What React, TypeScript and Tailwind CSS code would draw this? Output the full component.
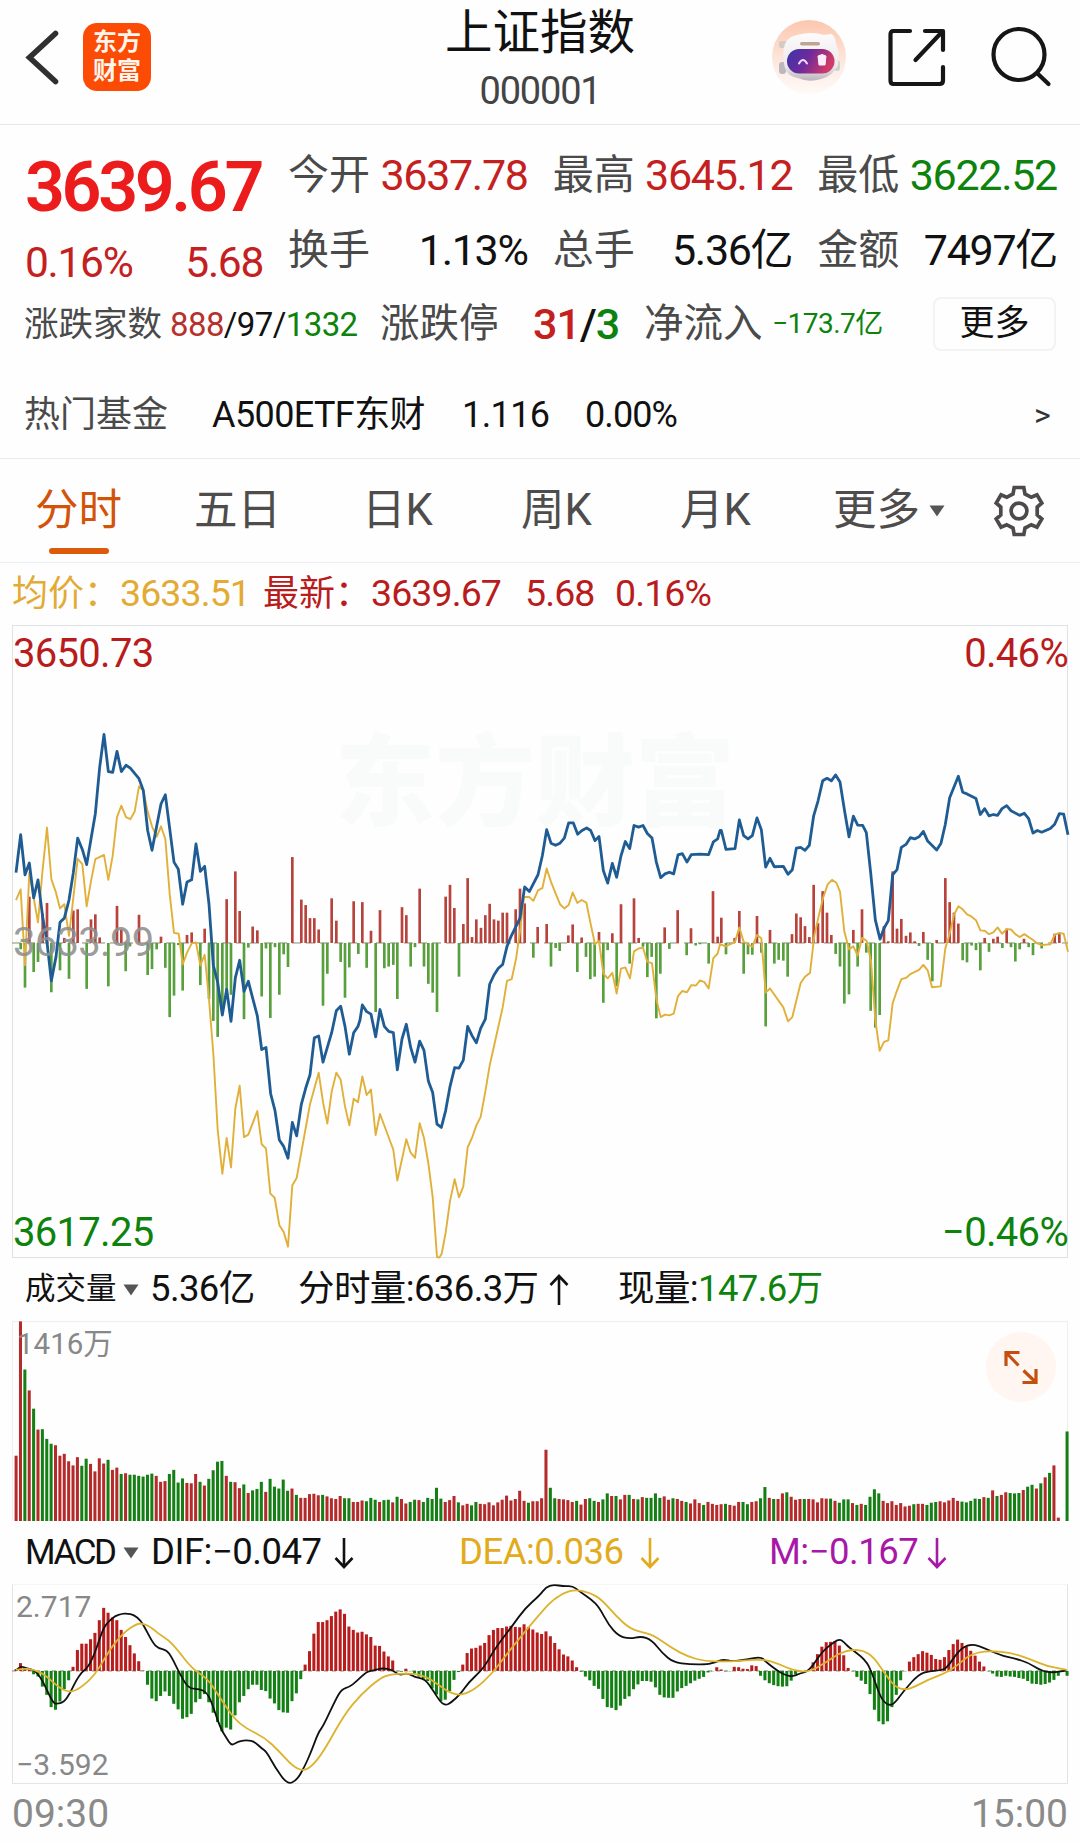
/* ============================================================
   App.tsx
   Index quote page: header, quote summary, period tabs and the
   intraday / volume / MACD panels.
   - Chart series are kept in plot units, each panel scales its
     own viewBox to the panel size
   ============================================================ */
import type { ReactNode } from "react";

type Segment = { x0: number; pts: string };

const PRICE_BASE = 767;
const MACD_BASE = 1103;
const VOL_BASE = 701;
const STEP = 12.71;

const price: Segment[] = [
  {
    x0: 0,
    pts: "48,600 62,510 75,605 88,577 101,660 114,617 128,705 141,765 154,857 168,800 180,718 193,708 207,665 220,600 233,518 247,545 260,581 273,520 286,460 299,350 312,272 325,360 338,362 351,312 364,360 378,345 391,352 417,377 430,405 443,500 456,547 470,490 483,437 496,415 509,495 522,575 535,592 548,675 561,622 575,617 588,532 601,597 614,585 627,675 640,820 653,860 667,938 680,877 693,953 706,850 719,808 732,882 745,858 758,898 772,940 785,1020 798,1015 812,1125 825,1165 838,1235 851,1250 864,1278 877,1193 890,1225 904,1150 917,1112 930,1080 943,992 956,988 969,1050 995,980 1009,928 1022,917 1035,965 1048,1031 1061,980 1074,965",
  },
  {
    x0: 1080,
    pts: "0,950 7,914 20,930 33,936 47,990 60,925 73,965 86,977 100,980 112,1068 126,995 139,960 152,1015 165,1050 179,1000 192,1022 205,1095 218,1122 231,1197 244,1205 257,1165 270,1108 284,1063 297,1064 310,1045 323,965 336,987 349,1004 362,970 376,948 389,865 402,843 415,827 428,818 441,775 454,750 480,708 494,634 508,645 521,625 534,605 547,560 560,498 573,530 587,535 600,530 613,518 626,482 640,482 653,509 666,500 680,494 692,500 705,524 717,514 730,595 743,625 757,578 770,611 783,560 796,526 809,543 822,488 836,492 849,488 862,507 876,518 889,575 902,612 915,603 928,599 941,603 954,558 967,555 981,575 994,557 1020,556 1046,557 1060,527 1073,520",
  },
  {
    x0: 2160,
    pts: "0,500 4,500 18,545 45,543 58,475 71,512 84,520 97,512 111,470 124,498 137,587 150,566 163,586 190,585 204,604 217,593 229,542 242,540 255,547 268,535 281,465 294,430 308,382 321,376 334,382 347,368 360,385 374,455 387,515 400,466 413,487 428,488 439,505 452,600 466,712 480,758 492,732 505,714 518,605 531,593 544,540 558,533 571,517 584,520 597,515 610,502 623,525 650,546 663,530 676,485 689,422 715,371 728,409 741,413 768,424 781,462 794,448 807,465 820,462 833,464 846,448 860,441 873,453 899,464 913,459 926,472 939,506 952,500 965,504 991,495 1004,485 1018,460 1031,461 1044,510",
  },
];

const average: Segment[] = [
  {
    x0: 0,
    pts: "48,665 62,640 75,820 88,600 101,660 114,718 127,600 141,493 154,615 167,645 180,685 193,675 207,750 220,660 233,567 247,580 260,680 273,620 286,568 312,558 325,617 338,560 351,468 364,441 378,468 391,473 404,455 417,395 430,405 443,455 456,490 470,515 483,490 496,520 509,650 522,743 536,745 548,818 561,790 575,768 588,766 601,820 614,795 627,900 640,1030 653,1210 667,1315 680,1230 693,1300 706,1160 719,1106 732,1228 745,1222 772,1166 785,1245 798,1255 811,1362 824,1372 838,1437 851,1453 864,1488 877,1342 890,1325 930,1150 956,1075 969,1145 982,1196 995,1120 1009,1075 1022,1092 1035,1155 1048,1200 1061,1137 1074,1145",
  },
  {
    x0: 1080,
    pts: "7,1084 20,1128 33,1115 47,1223 60,1173 100,1258 112,1331 139,1233 152,1265 165,1277 179,1195 192,1230 205,1290 218,1370 231,1513 238,1514 245,1505 257,1455 270,1380 284,1328 297,1371 310,1345 323,1252 336,1230 349,1200 362,1180 376,1120 389,1058 428,920 441,857 455,853 468,805 480,740 492,658 508,658 520,667 534,642 547,637 560,590 573,622 587,650 600,675 613,685 626,677 638,647 652,672 665,665 679,671 692,722 705,770 717,762 730,840 743,851 757,838 770,887 783,828 796,825 810,851 822,787 836,780 849,778 862,812 876,815 889,900 902,943 915,937 928,939 941,935 954,893 967,881 981,884 994,867 1008,868 1020,856 1033,860 1046,875 1060,803 1073,792",
  },
  {
    x0: 2160,
    pts: "0,770 18,775 31,770 45,765 58,730 71,764 97,776 111,748 124,756 137,885 150,875 190,920 204,953 217,943 242,862 255,847 270,838 283,750 297,700 310,658 323,628 336,617 349,624 360,645 373,740 387,782 400,775 413,797 426,755 440,762 453,810 466,950 479,1023 492,1002 505,998 518,910 531,880 544,853 558,850 571,841 597,831 610,819 623,832 636,872 662,870 676,780 689,745 702,700 715,680 728,687 741,699 754,704 768,713 781,737 794,738 807,746 820,742 833,730 846,745 860,734 873,735 886,746 899,753 913,746 939,760 952,768 965,772 991,770 1004,748 1018,743 1031,745 1044,788",
  },
];

// momentum bars around the previous close
const momentum: Segment[] = [
  {
    x0: 0,
    pts: "62,782 75,873 101,836 114,812 154,884 180,832 207,852 260,876 325,870 377,834 390,775 443,843 456,829 470,782 496,826 509,943 522,892 535,772 548,880 601,867 627,900 640,952 653,990 667,935 680,880 693,890 732,948 745,778 785,894 798,780 811,945 825,777 838,890 851,794 864,824 969,916 982,840 1022,812 1035,897 1048,825 1075,793 88,657 128,698 141,672 193,755 220,690 233,687 273,711 286,699 299,754 351,679 364,735 417,700 483,752 561,748 575,742 614,733 680,663 706,597 719,691 758,728 772,737 877,563 904,664 917,677 930,708 943,708 956,735 995,661 1009,714 1061,668",
  },
  {
    x0: 1080,
    pts: "7,670 33,738 60,689 126,682 139,701 179,638 257,657 270,629 283,684 310,722 323,613 336,753 349,711 363,731 376,701 389,674 402,711 415,714 428,695 441,695 467,687 480,638 494,673 533,729 560,722 625,749 638,723 665,754 717,741 757,744 783,675 822,661 836,755 914,730 953,689 993,732 1059,644 1073,752 20,826 47,931 73,827 86,823 100,819 112,900 152,823 165,777 192,823 205,864 218,885 231,931 297,847 520,802 573,823 587,779 599,786 652,836 678,800 691,853 704,847 730,909 743,784 770,870 809,816 849,776 862,848 875,800 889,946 901,840 928,781 980,796 1007,773 1020,770 1046,816",
  },
  {
    x0: 2160,
    pts: "4,707 44,755 58,691 111,703 150,736 216,746 229,697 242,706 255,727 268,753 281,629 294,720 308,644 321,695 334,748 400,736 426,687 492,727 505,763 518,597 531,733 544,710 558,750 571,742 584,763 610,741 650,760 676,613 689,670 702,695 715,721 794,755 820,757 833,752 860,733 912,757 1004,745 1018,746 18,794 31,770 71,840 84,794 97,795 124,790 137,965 163,816 176,807 190,809 203,847 347,793 360,823 373,911 387,889 413,823 439,790 452,928 466,968 479,938 597,774 623,807 637,858 728,808 741,813 755,773 768,784 781,832 807,788 847,779 873,777 886,811 899,782 926,777 939,796 965,780",
  },
];

const volume =
  "r526 r166 g295 r351 g400 r456 g455 g481 g494 r498 r526 r521 r541 r552 r530 g553 g534 r548 r568 r533 r547 g537 r564 r558 g575 r573 g577 g577 g580 g582 g577 g574 r580 r596 r594 g575 g564 g598 g587 r599 r600 r575 g596 r606 g588 g565 g542 g540 r580 g596 r597 r613 g603 r626 g619 g615 g596 r623 g588 g609 g614 g590 g620 r614 g631 r639 r639 r629 r628 r632 g631 r635 r640 r642 r634 g640 g640 r650 r650 r646 g648 g639 g644 r650 g645 g644 r651 g636 r642 r654 g650 g644 r645 g650 g639 g642 g612 g641 r650 r645 r634 g651 r659 r655 g659 g650 r655 r656 r651 r659 r651 r644 r633 r646 r642 r620 r647 g652 r648 r648 r640 r510 g612 g640 r642 r643 r645 r650 g647 r657 r642 g640 g647 r650 g643 g627 r634 g634 r643 r631 g631 r642 g643 r637 g639 g639 g627 g639 r635 r644 g640 r642 r647 g650 r654 r643 r653 g658 r650 r655 r658 r656 g655 r658 r660 r650 g650 g656 r650 r648 g640 g610 r639 g642 r642 r627 g624 r636 r644 r642 g642 r642 r643 r651 r640 r641 g641 r647 g652 g643 g643 r653 g658 r655 g658 g636 g616 g627 r647 r653 r648 r658 r653 r662 r660 g656 r655 r655 g658 g652 g650 r648 r651 r646 r639 r647 g649 g651 g647 g641 g642 r637 g639 r619 g634 r631 r624 g626 g627 g626 r618 g609 g604 r614 g600 r584 g572 r552 r692 r701 g461";

const macd = [
  1098, 1082, 1092, 1097, 1112, 1118, 1145, 1167, 1200, 1207, 1185, 1152, 1128, 1092, 1047, 1030, 1030, 1018, 1001, 967,
  934, 947, 960, 967, 993, 1012, 1034, 1056, 1077, 1102, 1140, 1177, 1184, 1170, 1158, 1170, 1191, 1206, 1231, 1227,
  1218, 1187, 1178, 1165, 1187, 1215, 1240, 1265, 1255, 1260, 1222, 1187, 1170, 1152, 1140, 1140, 1154, 1157, 1177, 1190,
  1208, 1214, 1215, 1184, 1163, 1125, 1086, 1050, 1003, 972, 972, 967, 956, 944, 938, 950, 984, 993, 1000, 998,
  1005, 1012, 1035, 1036, 1051, 1064, 1075, 1104, 1105, 1097, 1104, 1110, 1118, 1124, 1130, 1150, 1166, 1184, 1180, 1157,
  1127, 1106, 1086, 1055, 1043, 1041, 1035, 1028, 1007, 993, 988, 988, 984, 982, 985, 986, 978, 985, 992, 1000,
  1004, 997, 1010, 1028, 1045, 1059, 1064, 1075, 1093, 1105, 1118, 1128, 1143, 1151, 1178, 1200, 1202, 1208, 1196, 1178,
  1171, 1152, 1139, 1130, 1130, 1132, 1147, 1167, 1174, 1175, 1175, 1158, 1149, 1143, 1136, 1129, 1124, 1119, 1107, 1104,
  1093, 1099, 1104, 1104, 1092, 1093, 1097, 1098, 1088, 1090, 1116, 1128, 1136, 1141, 1144, 1145, 1144, 1129, 1112, 1104,
  1104, 1102, 1080, 1058, 1038, 1026, 1025, 1023, 1035, 1061, 1095, 1104, 1119, 1129, 1138, 1165, 1207, 1238, 1246, 1238,
  1200, 1167, 1128, 1104, 1078, 1066, 1058, 1050, 1054, 1060, 1071, 1073, 1066, 1047, 1031, 1019, 1028, 1037, 1049, 1062,
  1078, 1091, 1104, 1110, 1118, 1119, 1116, 1118, 1119, 1122, 1124, 1130, 1137, 1138, 1140, 1138, 1134, 1127, 1116, 1106,
  1116,
];

const dif: Segment[] = [
  {
    x0: 0,
    pts: "47,1102 60,1090 75,1095 98,1100 110,1110 124,1128 140,1160 155,1187 165,1192 187,1187 205,1162 222,1128 240,1105 255,1095 275,1060 300,990 315,972 335,955 355,950 370,949 390,953 410,968 425,993 445,1028 460,1042 485,1047 500,1067 520,1105 540,1138 555,1151 580,1151 600,1160 615,1185 640,1255 660,1285 672,1302 685,1297 695,1291 720,1288 740,1293 760,1310 775,1320 800,1362 835,1407 862,1397 885,1360 905,1318 925,1268 940,1250 975,1180 993,1152 1015,1146 1035,1132 1065,1105 1085,1102 1110,1095 1140,1100 1160,1115 1183,1108 1205,1120 1235,1125 1260,1158 1280,1187 1295,1195 1310,1188 1340,1163 1360,1135 1395,1105 1415,1080 1440,1040 1490,980 1525,935",
  },
  {
    x0: 1568,
    pts: "0,900 18,878 40,872 70,876 95,875 115,890 150,912 172,932 200,980 228,1009 260,1017 295,1010 325,1020 355,1055 388,1080 435,1085 485,1086 508,1080 532,1072 560,1078 600,1072 642,1065 655,1078 690,1103 715,1115 732,1118 755,1110 782,1103 815,1057 840,1035 868,1017 882,1025 897,1040 945,1072 965,1110 985,1165 1000,1188 1015,1195 1030,1190 1060,1152 1100,1112 1130,1103 1170,1101 1185,1090 1215,1050 1240,1033 1270,1033 1335,1061 1380,1070 1415,1080 1455,1102 1485,1108 1528,1102",
  },
];

const dea: Segment[] = [
  {
    x0: 0,
    pts: "47,1100 75,1096 100,1100 130,1112 165,1142 190,1157 212,1159 240,1145 280,1110 320,1045 360,1000 395,978 415,975 440,986 460,1003 490,1020 515,1045 560,1098 605,1125 640,1175 680,1230 715,1257 770,1282 810,1317 850,1358 880,1371 905,1360 940,1320 1000,1220 1050,1165 1105,1122 1135,1112 1180,1110 1220,1112 1260,1130 1295,1155 1325,1167 1345,1166 1380,1152 1430,1110 1480,1048",
  },
  {
    x0: 1568,
    pts: "0,950 40,910 80,890 110,886 145,893 180,912 220,955 262,990 300,1000 330,1007 380,1040 430,1065 480,1077 540,1078 600,1075 650,1072 690,1083 740,1103 785,1105 830,1080 870,1055 905,1046 940,1048 970,1067 1000,1108 1030,1145 1060,1154 1090,1145 1130,1125 1175,1110 1210,1090 1240,1065 1270,1053 1310,1049 1370,1055 1420,1070 1470,1090 1530,1100",
  },
];

function parse(segments: Segment[]): [number, number][] {
  return segments.flatMap(({ x0, pts }) =>
    pts.split(" ").map((p): [number, number] => {
      const [x, y] = p.split(",").map(Number);
      return [x + x0, y];
    })
  );
}

function Line({ data, color, width }: { data: Segment[]; color: string; width: number }) {
  return (
    <polyline
      points={parse(data).map((p) => p.join(",")).join(" ")}
      fill="none"
      stroke={color}
      strokeWidth={width}
      strokeLinejoin="round"
      vectorEffect="non-scaling-stroke"
    />
  );
}

// Quadratic curve through the midpoints, for the slow MACD lines
function Curve({ data, color }: { data: Segment[]; color: string }) {
  const p = parse(data);
  let d = `M${p[0][0]} ${p[0][1]}`;
  for (let i = 1; i < p.length - 1; i++) {
    d += ` Q${p[i][0]} ${p[i][1]} ${(p[i][0] + p[i + 1][0]) / 2} ${(p[i][1] + p[i + 1][1]) / 2}`;
  }
  d += ` L${p[p.length - 1][0]} ${p[p.length - 1][1]}`;
  return <path d={d} fill="none" stroke={color} strokeWidth={1.8} vectorEffect="non-scaling-stroke" />;
}

function Plot({ viewBox, children }: { viewBox: string; children: ReactNode }) {
  return (
    <svg viewBox={viewBox} preserveAspectRatio="none" className="block h-full w-full overflow-visible">
      {children}
    </svg>
  );
}

function PricePlot() {
  return (
    <Plot viewBox="36 12 3168 1503">
      <line x1={36} x2={3204} y1={767} y2={767} stroke="#8a8a7a" strokeWidth={1} strokeDasharray="9 5" vectorEffect="non-scaling-stroke" />
      {parse(momentum).map(([x, y], i) => (
        <rect
          key={i}
          x={x - 4}
          width={8}
          y={Math.min(y, PRICE_BASE)}
          height={Math.abs(y - PRICE_BASE)}
          fill={y < PRICE_BASE ? "#b8433c" : "#58a03c"}
        />
      ))}
      <Line data={average} color="#e0b03a" width={1.9} />
      <Line data={price} color="#1f5c94" width={2.8} />
    </Plot>
  );
}

function VolumePlot() {
  return (
    <Plot viewBox="36 165 3065 536">
      {volume.split(" ").map((v, i) => {
        const y = Number(v.slice(1));
        return (
          <rect key={i} x={43.5 + i * STEP} y={y} width={8.8} height={VOL_BASE - y} fill={v[0] === "r" ? "#b52a2a" : "#157f15"} />
        );
      })}
    </Plot>
  );
}

function MacdPlot() {
  return (
    <Plot viewBox="36 870 3065 536">
      <line x1={36} x2={3101} y1={1103} y2={1103} stroke="#8a8a7a" strokeWidth={1} strokeDasharray="4 4" vectorEffect="non-scaling-stroke" />
      {macd.map((y, i) => (
        <rect
          key={i}
          x={43.5 + i * STEP}
          y={Math.min(y, MACD_BASE)}
          width={8.8}
          height={Math.abs(y - MACD_BASE)}
          fill={y < MACD_BASE ? "#b81c1c" : "#128012"}
        />
      ))}
      <Curve data={dif} color="#111111" />
      <Curve data={dea} color="#dcb32c" />
    </Plot>
  );
}

function Robot() {
  return (
    <svg width="76" height="76" viewBox="0 0 76 76">
      <defs>
        <linearGradient id="halo" x1="0" y1="0" x2="0" y2="1">
          <stop offset="0" stopColor="#fcc6ae" />
          <stop offset="0.6" stopColor="#fdeae1" />
          <stop offset="1" stopColor="#fffaf7" />
        </linearGradient>
        <linearGradient id="shell" x1="0" y1="0" x2="0" y2="1">
          <stop offset="0" stopColor="#fdfbfb" />
          <stop offset="0.7" stopColor="#ece8ec" />
          <stop offset="1" stopColor="#b9b5bb" />
        </linearGradient>
        <linearGradient id="visor" x1="0" y1="0" x2="1" y2="0.3">
          <stop offset="0" stopColor="#3a36a8" />
          <stop offset="0.5" stopColor="#6e2a9c" />
          <stop offset="1" stopColor="#d03a68" />
        </linearGradient>
      </defs>
      <circle cx="38" cy="37" r="37" fill="url(#halo)" />
      <rect x="8" y="21" width="8" height="7" rx="2" fill="#d9c9c4" />
      <rect x="8" y="42" width="7" height="12" rx="3" fill="#bdb7bd" />
      <rect x="63" y="40" width="6" height="11" rx="3" fill="#d4cdd2" />
      <path d="M14 24 Q17 17 26 15 Q40 11 53 15 L60 14 Q64 15 65 24 Q69 33 67 45 Q62 56 50 59 Q38 63 27 58 Q14 56 13 43 Q11 32 14 24 Z" fill="url(#shell)" />
      <rect x="29" y="22" width="20" height="3.6" rx="1.8" fill="#c0a493" />
      <rect x="16" y="29" width="47.500" height="24.500" rx="12.200" fill="url(#visor)" />
      <path d="M28 43.500 Q32 36.500 36 43.500" fill="none" stroke="#eadcff" strokeWidth="2" strokeLinecap="round" />
      <path d="M47 36 L51 34.500 L55 36 L54 45 H48 Z" fill="#fbeef8" stroke="#fbeef8" strokeLinejoin="round" />
    </svg>
  );
}

function Header() {
  return (
    <header className="flex h-[125px] border-b border-[#e4e9ea]">
      <svg width="60" height="60" viewBox="0 0 60 60" className="ml-[14px] mt-[27px]">
        <path d="M41.500 6.500 L15.500 30.500 L41.500 54.500" fill="none" stroke="#303030" strokeWidth="5.6" strokeLinecap="round" strokeLinejoin="miter" />
      </svg>
      <div className="ml-[9px] mt-[23px] flex h-[68px] w-[68px] flex-col items-center justify-center rounded-[14px] bg-[#fb4b04] text-[24px] font-bold leading-[29px] text-[#fff5ec]">
        <span>东方</span>
        <span>财富</span>
      </div>
      <div className="ml-[195px] flex w-[388px] flex-col items-center">
        <h1 className="mt-[3px] text-[47.5px] leading-[60px] text-[#111]">上证指数</h1>
        <div className="mt-[6px] text-[38px] leading-[44px] tracking-[-1.2px] text-[#444]">000001</div>
      </div>
      <div className="ml-[37px] mt-[20px]">
        <Robot />
      </div>
      <svg width="64" height="64" viewBox="0 0 64 64" className="ml-[38px] mt-[26px] -mr-px">
        <g fill="none" stroke="#161616" strokeWidth="4.2" strokeLinecap="round" strokeLinejoin="round">
          <path d="M25 5 H8.500 Q5.500 5 5.500 8.500 V54.500 Q5.500 58 8.500 58 H54.500 Q58 58 58 54.500 V41" />
          <path d="M40 5 H58 V24 M56 7 L30.500 34" />
        </g>
      </svg>
      <svg width="68" height="68" viewBox="0 0 68 68" className="ml-[37px] mt-[22px]">
        <g fill="none" stroke="#161616" strokeWidth="4.2" strokeLinecap="round">
          <circle cx="34" cy="32.500" r="25.500" />
          <path d="M53 52 L63.500 62" />
        </g>
      </svg>
    </header>
  );
}

function Stat({ label, value, tone }: { label: string; value: string; tone: string }) {
  return (
    <div className="flex items-center justify-between whitespace-nowrap">
      <span className="text-[41px] text-[#4a4a4a]">{label}</span>
      <span className={`-mr-px text-[43px] tracking-[-1.3px] ${tone}`}>{value}</span>
    </div>
  );
}

function Summary() {
  return (
    <section className="h-[334px] border-b border-[#e8ebec]">
      <div className="flex h-[164px] pl-[25px] pr-[24px]">
        <div className="w-[238px] whitespace-nowrap">
          <div className="mt-[17px] text-[70px] font-semibold leading-[90px] tracking-[-3.4px] text-[#ec1c1c]">3639.67</div>
          <div className="mt-[1px] flex justify-between text-[42.5px] leading-[60px] tracking-[-1.3px] text-[#c42020]">
            <span>0.16%</span>
            <span>5.68</span>
          </div>
        </div>
        <div className="ml-[25px] mt-[13px] grid h-[150px] w-[768px] grid-cols-3 grid-rows-2 gap-x-[26px]">
          <Stat label="今开" value="3637.78" tone="text-[#c42020]" />
          <Stat label="最高" value="3645.12" tone="text-[#c42020]" />
          <Stat label="最低" value="3622.52" tone="text-[#0d830d]" />
          <Stat label="换手" value="1.13%" tone="text-[#111]" />
          <Stat label="总手" value="5.36亿" tone="text-[#111]" />
          <Stat label="金额" value="7497亿" tone="text-[#111]" />
        </div>
      </div>

      {/* Breadth row */}
      <div className="mt-[8px] flex h-[54px] items-center whitespace-nowrap pl-[24px] leading-none text-[#111]">
        <span className="w-[146px] text-[34.5px] text-[#4a4a4a]">涨跌家数</span>
        <span className="w-[210px] text-[33px] tracking-[-0.6px]">
          <span className="text-[#b8302c]">888</span>/97/<span className="text-[#0d830d]">1332</span>
        </span>
        <span className="w-[153px] text-[39.5px] text-[#4a4a4a]">涨跌停</span>
        <span className="w-[111px] text-[43px] font-medium tracking-[-1px]">
          <span className="text-[#c42020]">31</span>/<span className="text-[#0d830d]">3</span>
        </span>
        <span className="w-[128px] text-[39.5px] text-[#4a4a4a]">净流入</span>
        <span className="w-[161px] text-[28px] tracking-[-0.5px] text-[#0d830d]">−173.7亿</span>
        <button className="h-[54px] w-[123px] rounded-[8px] border-2 border-[#f3f3f3] text-[35px] leading-[44px] text-[#111]">更多</button>
      </div>

      {/* Hot fund row */}
      <div className="mt-[36px] flex h-[56px] items-center whitespace-nowrap pl-[24px] text-[36px] leading-none text-[#111]">
        <span className="w-[188px] text-[#4a4a4a]">热门基金</span>
        <span className="w-[250px] tracking-[-0.6px]">A500ETF东财</span>
        <span className="w-[123px] tracking-[-0.6px]">1.116</span>
        <span className="w-[449px] tracking-[-0.9px]">0.00%</span>
        <span className="text-[32px] text-[#333]">&gt;</span>
      </div>
    </section>
  );
}

function Triangle() {
  return (
    <svg width="16" height="12" viewBox="0 0 16 12" className="block">
      <path d="M0.500 0.500 H15.500 L8 11.500 Z" fill="#555" />
    </svg>
  );
}

function Tabs() {
  return (
    <nav className="flex h-[104px] whitespace-nowrap border-b border-[#eceeef] pl-[35px] text-[43.5px] leading-[104px] text-[#4f4c4c]">
      <div className="flex w-[159px] flex-col text-[#d35408]">
        <span className="h-[89px]">分时</span>
        <span className="ml-[14px] h-[6px] w-[60px] rounded-full bg-[#dc5a0a]" />
      </div>
      <span className="w-[168px]">五日</span>
      <span className="w-[159px]">日K</span>
      <span className="w-[159px]">周K</span>
      <span className="w-[153px]">月K</span>
      <span className="flex w-[157px] items-center gap-[9px]">
        更多
        <Triangle />
      </span>
      <svg width="56" height="56" viewBox="-28 -28 56 56" className="mt-[24px] ml-px">
        <g fill="none" stroke="#4f4a4a" strokeWidth="3.7">
          <path d="M-4.800 -23.500 H4.800 L6 -17 L12.300 -13.700 L18 -16.200 L22.800 -8 L18.200 -4 V4 L22.800 8 L18 16.200 L12.300 13.700 L6 17 L4.800 23.500 H-4.800 L-6 17 L-12.300 13.700 L-18 16.200 L-22.800 8 L-18.200 4 V-4 L-22.800 -8 L-18 -16.200 L-12.300 -13.700 L-6 -17 Z" />
          <circle r="7.900" />
        </g>
      </svg>
    </nav>
  );
}

function Arrow({ up }: { up?: boolean }) {
  return (
    <svg width="20" height="32" viewBox="0 0 20 32" className={up ? "block" : "block rotate-180"}>
      <path d="M10 31 V2 M1.500 11 L10 2 L18.500 11" fill="none" stroke="currentColor" strokeWidth="2.6" />
    </svg>
  );
}

export default function App() {
  return (
    <div className="h-[1844px] w-[1080px] overflow-hidden bg-[#fefefe] font-[Roboto,'Noto_Sans_CJK_SC',sans-serif]">
      <Header />
      <Summary />
      <Tabs />

      {/* Legend */}
      <div className="flex h-[62px] items-center whitespace-nowrap pl-[12px] text-[36px] leading-none text-[#b81c1c]">
        <span className="w-[108px] text-[#e2ab34]">均价：</span>
        <span className="w-[143px] text-[37.5px] tracking-[-0.9px] text-[#e2ab34]">3633.51</span>
        <span className="w-[108px]">最新：</span>
        <span className="w-[154px] text-[37.5px] tracking-[-0.9px]">3639.67</span>
        <span className="w-[90px] text-[37.5px] tracking-[-0.9px]">5.68</span>
        <span className="text-[37.5px] tracking-[-0.9px]">0.16%</span>
      </div>

      {/* Intraday price */}
      <div className="relative ml-[12px] h-[633px] w-[1056px] border border-[#dfe2e3]">
        <div className="absolute left-[322px] top-[98px] text-[100px] font-black leading-[120px] text-[#f9fafa]">东方财富</div>
        <div className="absolute inset-[-1px]">
          <PricePlot />
        </div>
        <div className="absolute inset-0 text-[40px] leading-[56px] tracking-[-0.7px]">
          <span className="absolute left-0 top-0 text-[#b81c1c]">3650.73</span>
          <span className="absolute right-[-1px] top-0 text-[#b81c1c]">0.46%</span>
          <span className="absolute left-0 top-[289px] text-[#8f8f8f]/90">3633.99</span>
          <span className="absolute bottom-[-4px] left-0 text-[#0d830d]">3617.25</span>
          <span className="absolute bottom-[-4px] right-[-1px] text-[#0d830d]">−0.46%</span>
        </div>
      </div>

      {/* Volume */}
      <div className="flex h-[63px] items-center whitespace-nowrap pl-[25px] text-[36.5px] leading-none tracking-[-0.6px] text-[#111]">
        <span className="w-[98px] text-[30.5px] tracking-normal">成交量</span>
        <span className="w-[27px]"><Triangle /></span>
        <span className="w-[148px]">5.36亿</span>
        <span className="w-[251px]">分时量:636.3万</span>
        <span className="w-[69px]"><Arrow up /></span>
        <span>现量:<span className="text-[#0d830d]">147.6万</span></span>
      </div>
      <div className="relative ml-[12px] h-[200px] w-[1056px] border-x border-t border-[#eceeef]">
        <div className="absolute inset-[-1px] bottom-0">
          <VolumePlot />
        </div>
        <span className="absolute left-[4px] top-0 text-[29.5px] leading-[44px] text-[#888]">1416万</span>
        <div className="absolute right-[11px] top-[10px] flex h-[70px] w-[70px] items-center justify-center rounded-full bg-[#fff5f1]">
          <svg width="36" height="36" viewBox="0 0 36 36">
            <path d="M16.500 3.500 H3 V17 M3.500 4 L15.500 16.500 M19.500 33.500 H33 V20 M32.500 33 L20.500 21.500" fill="none" stroke="#c4500f" strokeWidth="3.2" />
          </svg>
        </div>
      </div>

      {/* MACD */}
      <div className="flex h-[63px] items-center whitespace-nowrap pl-[25px] text-[36.5px] leading-none tracking-[-0.5px] text-[#111]">
        <span className="w-[98px] text-[35px] tracking-[-2.4px]">MACD</span>
        <span className="w-[28px]"><Triangle /></span>
        <span className="w-[183px]">DIF:−0.047</span>
        <span className="w-[125px]"><Arrow /></span>
        <span className="w-[181px] text-[#e2ab1c]">DEA:0.036</span>
        <span className="w-[129px] text-[#e2ab1c]"><Arrow /></span>
        <span className="w-[158px] text-[#a818a8]">M:−0.167</span>
        <span className="text-[#a818a8]"><Arrow /></span>
      </div>
      <div className="relative ml-[12px] h-[200px] w-[1056px] border border-[#e2e4e5] border-t-[#f4f5f5]">
        <div className="absolute inset-[-1px]">
          <MacdPlot />
        </div>
        <span className="absolute left-[3px] top-0 text-[30px] leading-[44px] text-[#888]">2.717</span>
        <span className="absolute bottom-[-4px] left-[3px] text-[30px] leading-[44px] text-[#888]">−3.592</span>
      </div>
      <div className="flex h-[60px] items-center justify-between px-[12px] text-[39px] leading-none text-[#8a8a8a]">
        <span>09:30</span>
        <span>15:00</span>
      </div>
    </div>
  );
}
